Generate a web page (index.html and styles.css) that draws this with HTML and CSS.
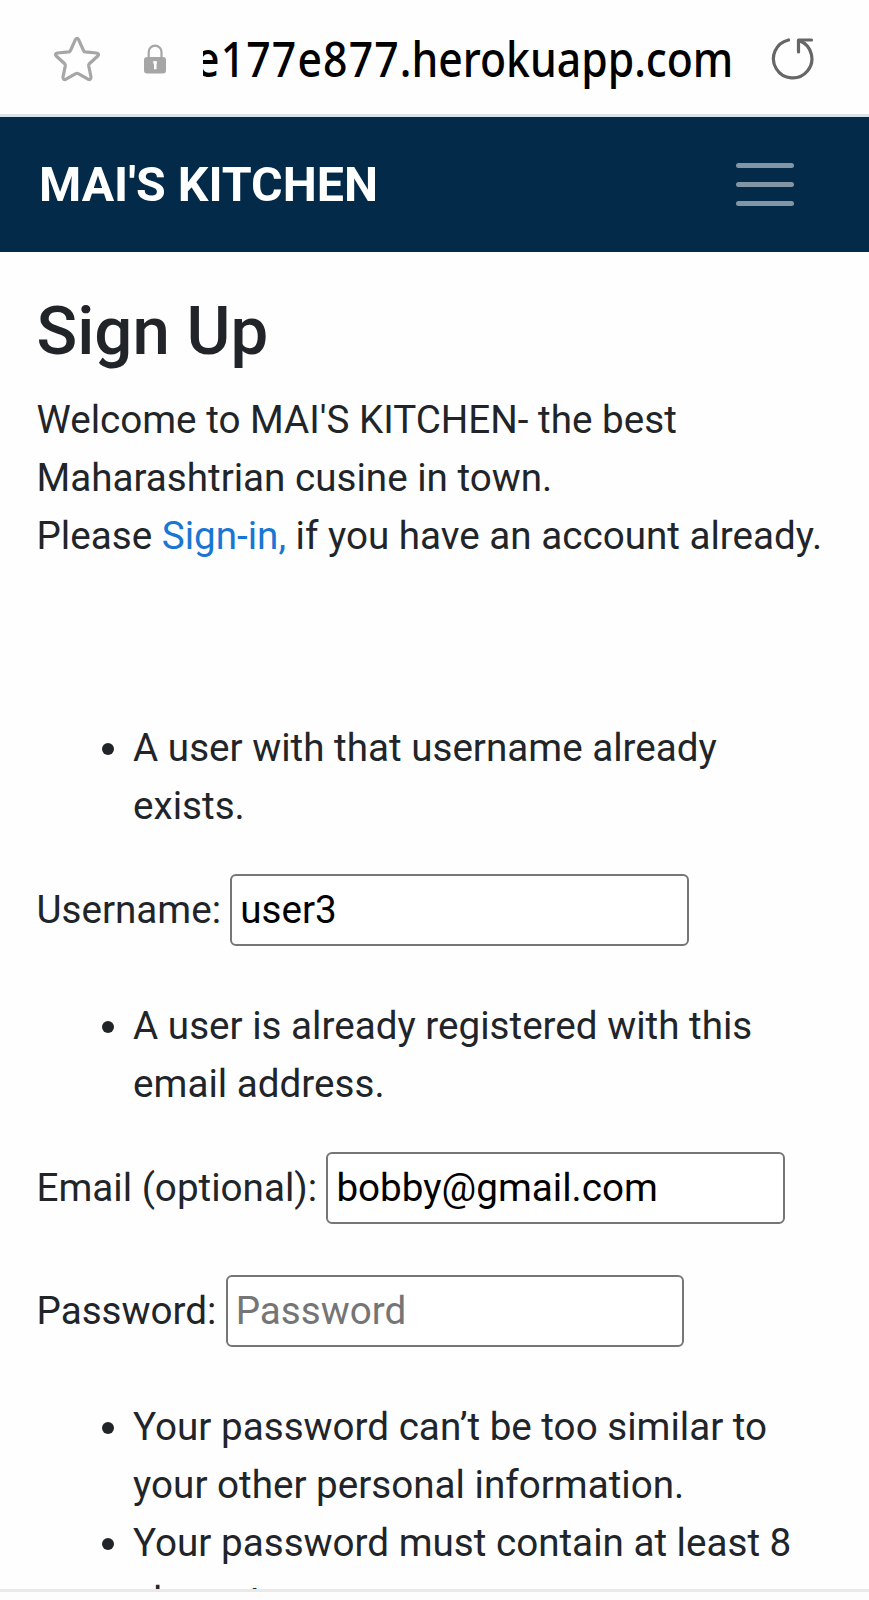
FILE: index.html
```html
<!DOCTYPE html>
<html lang="en">
<head>
<meta charset="utf-8">
<title>Sign Up</title>
<link rel="stylesheet" href="styles.css">
</head>
<body>
<div class="screen">
  <header class="browser-bar">
    <svg class="star" viewBox="0 0 48 48" width="48" height="48" fill="none" stroke="#a6a6a6" stroke-width="3.2" stroke-linejoin="round"><path d="M22.300 4.800Q24 1.800 25.700 4.800L30.500 15.500Q31 16.600 32.200 16.800L43.500 18Q46.800 18.700 44.800 21L36.300 28.800Q35.500 29.600 35.700 30.800L38 42Q38 45.500 35 44.200L25.200 38.600Q24 38 22.800 38.600L13 44.200Q10 45.500 10 42L12.300 30.800Q12.500 29.600 11.700 28.800L3.200 21Q1.200 18.700 4.500 18L15.800 16.800Q17 16.600 17.500 15.500Z"/></svg>
    <svg class="lock" viewBox="0 0 22 30" width="22" height="30"><path d="M4.700 15V8a6.400 6.400 0 0 1 12.800 0v7" fill="none" stroke="#a6a6a6" stroke-width="2.2"/><rect x="0" y="13" width="22" height="16.500" rx="3" fill="#a6a6a6"/><path d="M8.800 17.500Q11 16.300 13.200 17.500L12.500 20.800V25.200H10V20.800Z" fill="#fff"/></svg>
    <div class="url"><div class="url-text"><span class="host-id">e177e877</span>.herokuapp.com</div></div>
    <svg class="reload" viewBox="0 0 44 44" width="44" height="44" fill="none" stroke="#666" stroke-width="3.2" stroke-linecap="round" stroke-linejoin="round"><path d="M17.500 4A19.200 19.200 0 1 0 28.500 4.800"/><path d="M27.500 16V4H40.500"/></svg>
  </header>
  <nav class="navbar">
    <a class="brand">MAI'S KITCHEN</a>
    <div class="toggler"><i></i><i></i><i></i></div>
  </nav>
  <main class="content">
    <h1>Sign Up</h1>
    <p class="intro">Welcome to MAI'S KITCHEN- the best<br>Maharashtrian cusine in town.<br>Please <a class="link">Sign-in,</a> if you have an account already.</p>
    <form>
      <ul class="errors"><li>A user with that username already<br>exists.</li></ul>
      <div class="field"><label>Username:</label><input type="text" value="user3"></div>
      <ul class="errors"><li>A user is already registered with this<br>email address.</li></ul>
      <div class="field"><label>Email (optional):</label><input type="text" value="bobby@gmail.com"></div>
      <div class="field"><label>Password:</label><input type="password" placeholder="Password"></div>
      <ul class="errors"><li>Your password can’t be too similar to<br>your other personal information.</li><li>Your password must contain at least 8<br>characters.</li></ul>
    </form>
  </main>
  <footer class="bottom-bar"></footer>
</div>
</body>
</html>
```
FILE: styles.css
```css
* { box-sizing: border-box; }
body { margin: 0; background: #fefefe; overflow: hidden; }
.screen {
  display: flex; flex-direction: column;
  width: 869px; height: 1600px; overflow: hidden;
  font: 38.62px/57.94px Roboto, sans-serif;
  color: #212529;
}
.browser-bar {
  display: flex; align-items: center; flex: none;
  height: 117px; padding: 0 54px 0 53px;
  border-bottom: 3px solid #dbe3ea; background: #fefefe;
}
.star { margin-top: 3px; }
.lock { margin: 3px 0 0 43px; }
.url {
  display: flex; justify-content: flex-end;
  width: 530px; margin: 1px 0 0 37px; overflow: hidden;
  font: 500 49px/80px "Noto Sans", sans-serif; color: #000;
  white-space: nowrap;
}
/* condensed address-bar lettering */
.url-text { transform: scaleX(0.872); transform-origin: right center; }
.host-id { letter-spacing: 1.3px; }
.reload { margin: 2px 0 0 auto; }
.navbar {
  display: flex; align-items: center; justify-content: space-between; flex: none;
  height: 135px; padding: 0 75px 0 39px;
  background: #032a48;
}
.brand { font-weight: 700; font-size: 48.28px; color: #fff; }
.toggler { display: flex; flex-direction: column; gap: 14.3px; width: 58px; }
.toggler i { height: 5px; border-radius: 2.5px; background: #8195a4; }
.content { flex: 1; min-height: 0; overflow: hidden; padding: 39px 36.5px 0; }
h1 { margin: 0 0 19.8px; font-size: 67.2px; line-height: 80.6px; font-weight: 500; }
.intro { margin: 0 0 153.7px; white-space: nowrap; }
.link { color: #1976d2; }
.errors { margin: 0 0 39.3px; padding-left: 96.6px; white-space: nowrap; }
.field { display: flex; align-items: center; height: 72px; margin-bottom: 51px; }
.field label { margin-right: 9.3px; }
.field input {
  width: 458.5px; height: 72px; padding: 0 8px 1px;
  border: 2px solid #767676; border-radius: 6px; background: #fff;
  font: 38.62px Roboto, sans-serif; color: #000;
}
.field input::placeholder { color: #757575; }
.bottom-bar { flex: none; height: 11px; border-top: 3px solid #e9e9e9; background: #fdfdfd; }
```
